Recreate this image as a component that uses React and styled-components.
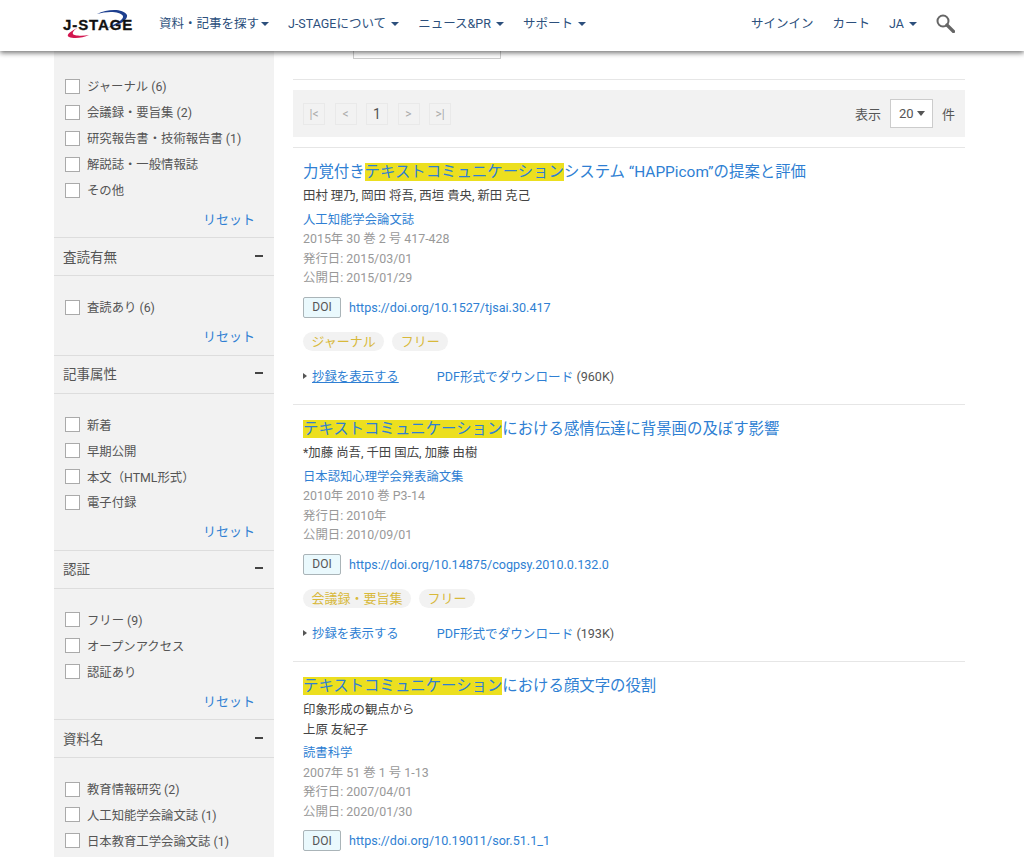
import React from "react";
import styled, { createGlobalStyle } from "styled-components";

const GlobalStyle = createGlobalStyle`
  html, body {
    margin: 0;
    padding: 0;
    background: #fff;
  }
  body {
    font-family: Roboto, "Noto Sans CJK JP", "Liberation Sans", sans-serif;
    color: #555;
  }
`;

const FILTERS = [
  { items: ["ジャーナル (6)", "会議録・要旨集 (2)", "研究報告書・技術報告書 (1)", "解説誌・一般情報誌", "その他"] },
  { title: "査読有無", items: ["査読あり (6)"] },
  { title: "記事属性", items: ["新着", "早期公開", "本文（HTML形式）", "電子付録"] },
  { title: "認証", items: ["フリー (9)", "オープンアクセス", "認証あり"] },
  { title: "資料名", items: ["教育情報研究 (2)", "人工知能学会論文誌 (1)", "日本教育工学会論文誌 (1)"] },
];

const RESULTS = [
  {
    before: "力覚付き",
    mark: "テキストコミュニケーション",
    after: "システム “HAPPicom”の提案と評価",
    authors: ["田村 理乃, 岡田 将吾, 西垣 貴央, 新田 克己"],
    journal: "人工知能学会論文誌",
    meta: ["2015年 30 巻 2 号 417-428", "発行日: 2015/03/01", "公開日: 2015/01/29"],
    doi: "https://doi.org/10.1527/tjsai.30.417",
    tag: "ジャーナル",
    size: "(960K)",
    hovered: true,
  },
  {
    mark: "テキストコミュニケーション",
    after: "における感情伝達に背景画の及ぼす影響",
    authors: ["*加藤 尚吾, 千田 国広, 加藤 由樹"],
    journal: "日本認知心理学会発表論文集",
    meta: ["2010年 2010 巻 P3-14", "発行日: 2010年", "公開日: 2010/09/01"],
    doi: "https://doi.org/10.14875/cogpsy.2010.0.132.0",
    tag: "会議録・要旨集",
    size: "(193K)",
  },
  {
    mark: "テキストコミュニケーション",
    after: "における顔文字の役割",
    authors: ["印象形成の観点から", "上原 友紀子"],
    journal: "読書科学",
    meta: ["2007年 51 巻 1 号 1-13", "発行日: 2007/04/01", "公開日: 2020/01/30"],
    doi: "https://doi.org/10.19011/sor.51.1_1",
  },
];

export default function App() {
  return (
    <Page>
      <GlobalStyle />
      <Header>
        <Logo />
        <NavItem>資料・記事を探す<Caret /></NavItem>
        <NavItem>J-STAGEについて <Caret /></NavItem>
        <NavItem>ニュース&amp;PR <Caret /></NavItem>
        <NavItem>サポート <Caret /></NavItem>
        <NavRight>
          <NavItem>サインイン</NavItem>
          <NavItem>カート</NavItem>
          <NavItem>JA <Caret /></NavItem>
          <SearchIcon />
        </NavRight>
      </Header>

      <Body>
        <Sidebar>
          {FILTERS.map((group, i) => (
            <FilterGroup key={i}>
              {group.title && (
                <FilterHead>
                  {group.title}
                  <Minus />
                </FilterHead>
              )}
              <FilterList $first={!group.title}>
                {group.items.map((label) => (
                  <FilterRow key={label}>
                    <Check />
                    {label}
                  </FilterRow>
                ))}
              </FilterList>
              {i < FILTERS.length - 1 && <Reset>リセット</Reset>}
            </FilterGroup>
          ))}
        </Sidebar>

        <Main>
          <SearchStub />
          <Rule />
          <Pager>
            <PageBtn>|&lt;</PageBtn>
            <PageBtn>&lt;</PageBtn>
            <PageBtn $current>1</PageBtn>
            <PageBtn>&gt;</PageBtn>
            <PageBtn>&gt;|</PageBtn>
            <PerPage>
              表示
              <PerSelect>
                20 <SelectCaret />
              </PerSelect>
              件
            </PerPage>
          </Pager>
          {RESULTS.map((r) => (
            <Result key={r.doi}>
              <Title>
                {r.before}
                <Mark>{r.mark}</Mark>
                {r.after}
              </Title>
              {r.authors.map((a) => (
                <Authors key={a}>{a}</Authors>
              ))}
              <Journal>{r.journal}</Journal>
              {r.meta.map((m) => (
                <Meta key={m}>{m}</Meta>
              ))}
              <DoiRow>
                <DoiBadge>DOI</DoiBadge>
                <LinkText>{r.doi}</LinkText>
              </DoiRow>
              {r.tag && (
                <>
                  <Tags>
                    <Tag>{r.tag}</Tag>
                    <Tag>フリー</Tag>
                  </Tags>
                  <Actions>
                    <Toggle $hovered={r.hovered}>抄録を表示する</Toggle>
                    <span>
                      <LinkText>PDF形式でダウンロード</LinkText> {r.size}
                    </span>
                  </Actions>
                </>
              )}
            </Result>
          ))}
        </Main>
      </Body>
    </Page>
  );
}

function Logo() {
  return (
    <LogoWrap>
      <svg width="70" height="38" viewBox="0 0 70 38">
        <path d="M34 9 C44 4 60 3 64 10 C65 16 54 21 44 23 C52 19 61 15 60 11 C57 6 44 6 34 9Z" fill="#1d3f8f" />
        <path d="M16 22 C8 26 2 30 6 32 C11 34 20 33 26 30 C20 31 11 31 10 29 C9 27 12 24 16 22Z" fill="#d3164f" />
      </svg>
      <LogoText>J-STAGE</LogoText>
    </LogoWrap>
  );
}

function SearchIcon() {
  return (
    <svg width="19" height="19" viewBox="0 0 19 19" aria-hidden="true">
      <circle cx="7" cy="7" r="5.5" fill="none" stroke="#666" strokeWidth="2" />
      <path d="M11 11 L17.5 17.5" stroke="#666" strokeWidth="3.2" strokeLinecap="round" />
    </svg>
  );
}

const Page = styled.div`
  position: relative;
  width: 1024px;
  height: 857px;
  overflow: hidden;
`;

const Header = styled.header`
  position: absolute;
  top: 0;
  left: 0;
  right: 0;
  height: 51px;
  z-index: 5;
  display: flex;
  align-items: center;
  gap: 19px;
  padding: 0 69px 4px 63px;
  box-sizing: border-box;
  background: #fff;
  box-shadow: 0 2px 5px 0 rgba(0, 0, 0, 0.55);
`;

const LogoWrap = styled.div`
  position: relative;
  width: 70px;
  height: 38px;
  margin-right: 7px;
  svg {
    display: block;
  }
`;

const LogoText = styled.span`
  position: absolute;
  left: 0;
  top: 12px;
  font: bold 15px/16px "Liberation Sans", sans-serif;
  letter-spacing: 0.9px;
  white-space: nowrap;
  -webkit-text-stroke: 0.3px #111;
  color: #111;
`;

const NavItem = styled.span`
  font-size: 12.5px;
  line-height: 18px;
  color: #2c4f7c;
  white-space: nowrap;
`;

const Caret = styled.i`
  display: inline-block;
  margin-left: 2px;
  vertical-align: 2px;
  border-left: 4px solid transparent;
  border-right: 4px solid transparent;
  border-top: 4px solid #2c4f7c;
`;

const NavRight = styled.div`
  margin-left: auto;
  display: flex;
  align-items: center;
  gap: 19px;
`;

const Body = styled.div`
  display: flex;
  gap: 19px;
  padding: 0 59px 0 54px;
`;

const Sidebar = styled.aside`
  flex: 0 0 220px;
  height: 857px;
  background: #f2f2f2;
  font-size: 12.35px;
`;

const FilterGroup = styled.section``;

const FilterHead = styled.h3`
  display: flex;
  align-items: center;
  justify-content: space-between;
  height: 39px;
  margin: 0;
  padding: 0 11px 2px 9px;
  box-sizing: border-box;
  border-top: 1px solid #ddd;
  border-bottom: 1px solid #ddd;
  font-size: 13.5px;
  font-weight: 400;
  color: #555;
`;

const Minus = styled.i`
  width: 8px;
  height: 2px;
  background: #444;
`;

const FilterList = styled.ul`
  list-style: none;
  margin: 0;
  padding: ${(p) => (p.$first ? "73.5px" : "18px")} 0 0 11px;
`;

const FilterRow = styled.li`
  display: flex;
  align-items: center;
  gap: 7px;
  height: 25.9px;
  color: #555;
  white-space: nowrap;
`;

const Check = styled.i`
  flex: none;
  width: 13px;
  height: 13px;
  border: 1px solid #aaa;
  background: #fff;
`;

const Reset = styled.div`
  height: 34.5px;
  padding: 7px 19px 0 0;
  box-sizing: border-box;
  text-align: right;
  font-size: 13px;
  line-height: 20px;
  color: #2f7fd3;
`;

const Main = styled.main`
  flex: 0 0 672px;
  min-width: 0;
`;

const SearchStub = styled.div`
  width: 148px;
  height: 59px;
  margin-left: 60px;
  box-sizing: border-box;
  border: 1px solid #ccc;
`;

const Rule = styled.hr`
  height: 1px;
  margin: 20px 0 10px;
  border: 0;
  background: #e6e6e6;
`;

const Pager = styled.div`
  display: flex;
  align-items: center;
  gap: 9.5px;
  height: 47px;
  padding: 0 10px 0 10px;
  background: #f2f2f2;
`;

const PageBtn = styled.span`
  width: 22px;
  height: 22px;
  display: flex;
  align-items: center;
  justify-content: center;
  box-sizing: border-box;
  border: 1px solid #e9e9e9;
  font-size: ${(p) => (p.$current ? "14px" : "12px")};
  color: ${(p) => (p.$current ? "#555" : "#aaa")};
`;

const PerPage = styled.div`
  margin-left: auto;
  display: flex;
  align-items: center;
  gap: 9px;
  font-size: 13px;
  color: #555;
`;

const PerSelect = styled.span`
  display: flex;
  align-items: center;
  justify-content: space-between;
  width: 43px;
  height: 29px;
  padding: 0 7px 0 8px;
  box-sizing: border-box;
  border: 1px solid #ccc;
  background: #fff;
`;

const SelectCaret = styled.i`
  border-left: 4px solid transparent;
  border-right: 4px solid transparent;
  border-top: 5px solid #555;
`;

const Result = styled.article`
  height: 257px;
  margin-top: 10px;
  margin-bottom: -10px;
  padding: 13px 10px 0;
  box-sizing: border-box;
  border-top: 1px solid #e6e6e6;
`;

const Title = styled.h2`
  margin: 0 0 3px;
  font-size: 15.4px;
  line-height: 22px;
  font-weight: 400;
  color: #2f7fd3;
`;

const Mark = styled.span`
  background: #ecdf1f;
`;

const Authors = styled.div`
  font-size: 12.4px;
  line-height: 19.5px;
  color: #444;
`;

const Journal = styled.div`
  margin: 5px 0 -1px;
  font-size: 12.35px;
  line-height: 19.5px;
  color: #2f7fd3;
`;

const Meta = styled.div`
  font-size: 12.4px;
  line-height: 19.5px;
  color: #999;
`;

const DoiRow = styled.div`
  display: flex;
  align-items: center;
  gap: 8px;
  margin-top: 9px;
`;

const DoiBadge = styled.span`
  width: 38px;
  height: 21px;
  display: flex;
  align-items: center;
  justify-content: center;
  box-sizing: border-box;
  border: 1px solid #aab4b8;
  border-radius: 2px;
  background: #eaf9fd;
  font-size: 12px;
  color: #555;
`;

const LinkText = styled.span`
  font-size: 12.6px;
  color: #2f7fd3;
`;

const Tags = styled.div`
  display: flex;
  gap: 8px;
  margin-top: 14px;
`;

const Tag = styled.span`
  height: 19px;
  padding: 0 8.5px;
  border-radius: 10px;
  background: #f2f2f2;
  font-size: 13px;
  line-height: 19px;
  color: #d8b93a;
`;

const Actions = styled.div`
  display: flex;
  align-items: center;
  gap: 38px;
  margin-top: 16px;
  font-size: 12.6px;
  line-height: 20px;
  color: #555;
`;

const Toggle = styled.span`
  position: relative;
  margin-left: 9px;
  font-size: 12.4px;
  color: #2f7fd3;
  text-decoration: ${(p) => (p.$hovered ? "underline" : "none")};
  &::before {
    content: "";
    position: absolute;
    left: -9px;
    top: 6px;
    border-top: 3.5px solid transparent;
    border-bottom: 3.5px solid transparent;
    border-left: 4px solid #555;
  }
`;
